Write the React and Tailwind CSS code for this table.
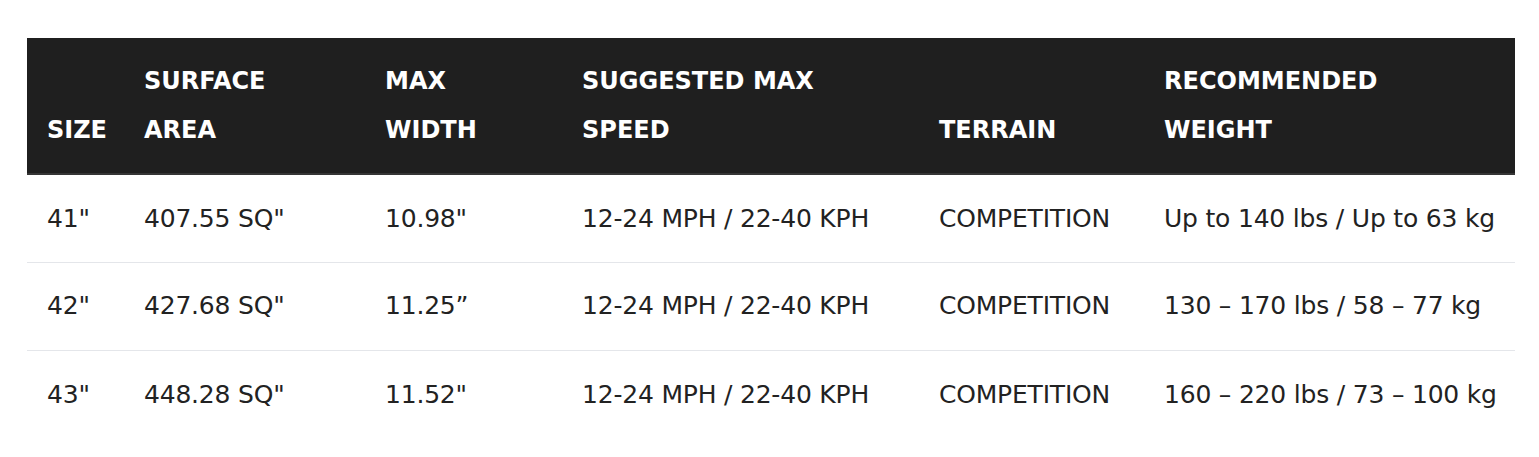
const headers = [
  ['', 'SIZE'],
  ['SURFACE', 'AREA'],
  ['MAX', 'WIDTH'],
  ['SUGGESTED MAX', 'SPEED'],
  ['', 'TERRAIN'],
  ['RECOMMENDED', 'WEIGHT'],
]

const rows = [
  ['41"', '407.55 SQ"', '10.98"', '12-24 MPH / 22-40 KPH', 'COMPETITION', 'Up to 140 lbs / Up to 63 kg'],
  ['42"', '427.68 SQ"', '11.25\u201D', '12-24 MPH / 22-40 KPH', 'COMPETITION', '130 \u2013 170 lbs / 58 \u2013 77 kg'],
  ['43"', '448.28 SQ"', '11.52"', '12-24 MPH / 22-40 KPH', 'COMPETITION', '160 \u2013 220 lbs / 73 \u2013 100 kg'],
]

export default function App() {
  return (
    <div className="min-h-screen bg-white pt-[38px] pl-[27px] pr-[24px] font-['DejaVu_Sans',sans-serif]">
      <table className="w-full table-fixed border-collapse">
        <colgroup>
          <col className="w-[97px]" />
          <col className="w-[241px]" />
          <col className="w-[197px]" />
          <col className="w-[357px]" />
          <col className="w-[225px]" />
          <col />
        </colgroup>
        <thead>
          <tr className="bg-[#1f1f1f] border-b-2 border-[#353535]">
            {headers.map(([a, b], i) => (
              <th
                key={i}
                className="pl-[20px] pt-[19px] pb-[18px] text-left align-bottom text-[24px] leading-[49px] font-bold text-white whitespace-nowrap"
              >
                {a && <div>{a}</div>}
                <div>{b}</div>
              </th>
            ))}
          </tr>
        </thead>
        <tbody>
          {rows.map((r, i) => (
            <tr key={i} className={i < rows.length - 1 ? 'border-b border-[#e4e6ea]' : ''}>
              {r.map((c, j) => (
                <td key={j} className="pl-[20px] h-[88px] align-middle text-[25px] tracking-[-0.2px] text-[#222] whitespace-nowrap">
                  {c}
                </td>
              ))}
            </tr>
          ))}
        </tbody>
      </table>
    </div>
  )
}
